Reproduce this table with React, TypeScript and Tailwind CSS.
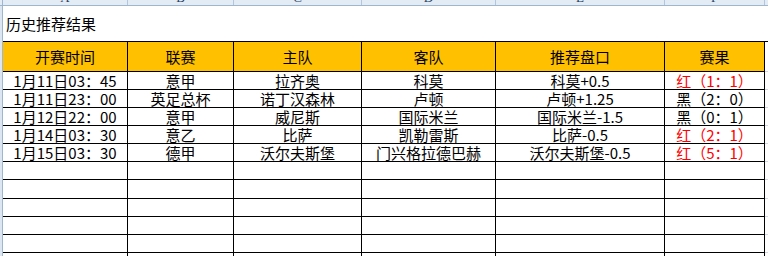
import React from "react";

const cols = [125, 106, 128, 134, 169, 100];
const letters = ["A", "B", "C", "D", "E", "F"];
const headers = ["开赛时间", "联赛", "主队", "客队", "推荐盘口", "赛果"];
const rows: { c: string[]; red: boolean }[] = [
  { c: ["1月11日03：45", "意甲", "拉齐奥", "科莫", "科莫+0.5", "红（1：1）"], red: true },
  { c: ["1月11日23：00", "英足总杯", "诺丁汉森林", "卢顿", "卢顿+1.25", "黑（2：0）"], red: false },
  { c: ["1月12日22：00", "意甲", "威尼斯", "国际米兰", "国际米兰-1.5", "黑（0：1）"], red: false },
  { c: ["1月14日03：30", "意乙", "比萨", "凯勒雷斯", "比萨-0.5", "红（2：1）"], red: true },
  { c: ["1月15日03：30", "德甲", "沃尔夫斯堡", "门兴格拉德巴赫", "沃尔夫斯堡-0.5", "红（5：1）"], red: true },
];
const emptyHeights = [18, 19, 18, 18, 18, 18];

export default function App() {
  return (
    <div
      className="w-[768px] h-[256px] overflow-hidden bg-white text-black"
      style={{ fontFamily: '"Noto Sans CJK SC", "Liberation Sans", sans-serif' }}
    >
      {/* column header strip */}
      <div className="flex h-[6px] bg-[#e3ebf5] border-b border-[#9eb6ce] overflow-hidden">
        <div className="w-[3px] shrink-0 border-r border-[#9eb6ce]" />
        {cols.map((w, i) => (
          <div
            key={i}
            className="shrink-0 border-r border-[#b3c6dc] flex justify-center overflow-hidden"
            style={{ width: w }}
          >
            <span className="text-[13px] leading-[13px] -mt-[9px] text-[#27415f]" style={{ fontFamily: '"Liberation Serif", serif' }}>
              {letters[i]}
            </span>
          </div>
        ))}
        <div className="flex-1" />
      </div>

      <div className="flex">
        {/* row header strip */}
        <div className="w-[3px] shrink-0 bg-[#dce6f2] border-r border-[#9eb6ce] h-[250px]" />

        <div className="flex flex-col">
          <div className="h-[35px] flex items-center pl-[3px] text-[15px] leading-[18px]">历史推荐结果</div>

          {/* table */}
          <div className="flex border-t border-black">
            <div className="flex">
              {headers.map((h, i) => (
                <div
                  key={i}
                  className="h-[30px] bg-[#ffc000] border-r border-b border-black flex items-center justify-center text-[15px] leading-[18px]"
                  style={{ width: cols[i] }}
                >
                  {h}
                </div>
              ))}
            </div>
            <div className="w-[3px] h-[30px] border-b border-[#d0d7e5]" />
          </div>

          {rows.map((r, ri) => (
            <div key={ri} className="flex">
              {r.c.map((t, i) => (
                <div
                  key={i}
                  className={`h-[18px] border-r border-b border-black flex items-center justify-center text-[15px] leading-[15px] whitespace-nowrap ${
                    i === 5 && r.red ? "text-[#ff0000]" : "text-black"
                  }`}
                  style={{ width: cols[i] }}
                >
                  {t}
                </div>
              ))}
              <div className="w-[3px] h-[18px] border-b border-[#d0d7e5]" />
            </div>
          ))}

          {emptyHeights.map((h, ri) => (
            <div key={ri} className="flex">
              {cols.map((w, i) => (
                <div key={i} className="border-r border-b border-black" style={{ width: w, height: h }} />
              ))}
              <div className="w-[3px] border-b border-[#d0d7e5]" style={{ height: h }} />
            </div>
          ))}
        </div>
      </div>
    </div>
  );
}
